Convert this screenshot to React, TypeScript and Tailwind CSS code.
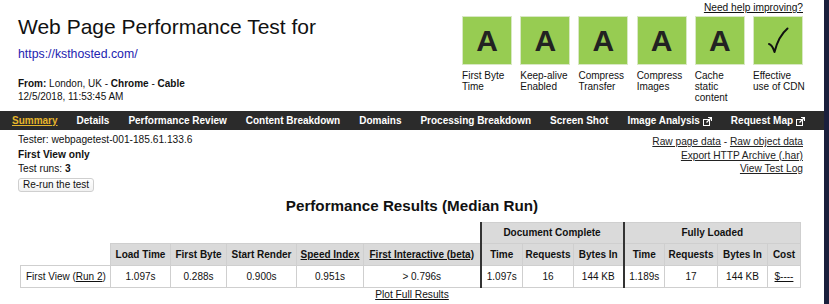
import React from "react";

// WebPageTest summary header + median run table
const grades = [
  { grade: "A", label: ["First Byte", "Time"] },
  { grade: "A", label: ["Keep-alive", "Enabled"] },
  { grade: "A", label: ["Compress", "Transfer"] },
  { grade: "A", label: ["Compress", "Images"] },
  { grade: "A", label: ["Cache", "static", "content"] },
  { grade: "check", label: ["Effective", "use of CDN"] },
];

const navItems = [
  { label: "Summary", active: true },
  { label: "Details" },
  { label: "Performance Review" },
  { label: "Content Breakdown" },
  { label: "Domains" },
  { label: "Processing Breakdown" },
  { label: "Screen Shot" },
  { label: "Image Analysis", external: true },
  { label: "Request Map", external: true },
];

function ExternalIcon() {
  return (
    <svg width="9" height="9" viewBox="0 0 9 9" className="ml-[3px] inline-block" aria-hidden>
      <rect x="0.5" y="2.5" width="6" height="6" fill="none" stroke="white" strokeWidth="1" />
      <path d="M3.5 5.5 L8.5 0.5" stroke="white" strokeWidth="1.2" />
      <path d="M5 0.5 H8.5 V4" fill="none" stroke="white" strokeWidth="1.2" />
    </svg>
  );
}

function Check() {
  return (
    <svg width="22" height="28" viewBox="0 0 22 28" aria-hidden>
      <path
        d="M2 17 C4 17.5 6 20 7.5 25 C10 15 14 7 20.5 1.5"
        fill="none"
        stroke="#111"
        strokeWidth="2"
        strokeLinecap="round"
        strokeLinejoin="round"
      />
    </svg>
  );
}

const th = "border border-[#cfcfcf] bg-[#dadada] font-bold text-center px-0";
const td = "border border-[#cfcfcf] bg-white text-center px-0";
const thick = "border-l-2 border-l-[#333]";

export default function App() {
  return (
    <div className="flex h-[304px] w-[829px] overflow-hidden bg-[#1a1f3c] font-['Liberation_Sans',Arial,sans-serif] text-[#111]">
      <div className="w-[824px] shrink-0 bg-white">
        {/* header */}
        <div className="flex h-[111px] justify-between">
          <div className="pl-[18px] pt-[15px]">
            <h1 className="text-[21px] leading-[24px] font-normal text-[#111]">
              Web Page Performance Test for
            </h1>
            <a className="mt-[7px] block text-[12.3px] leading-[16px] text-[#2323b0]">https://ksthosted.com/</a>
            <div className="mt-[15px] text-[10px] leading-[13px]">
              <div>
                <b>From:</b> London, UK - <b>Chrome</b> - <b>Cable</b>
              </div>
              <div>12/5/2018, 11:53:45 AM</div>
            </div>
          </div>
          <div className="flex flex-col items-end pr-[21px] pt-[1px]">
            <a className="text-[10.2px] leading-[13px] underline">Need help improving?</a>
            <div className="mt-[2px] flex gap-[8.2px]">
              {grades.map((g, i) => (
                <div key={i} className="w-[50px]">
                  <div className="flex h-[49px] w-[50px] items-center justify-center border border-[#d8e8c4] bg-[#97cc52]">
                    {g.grade === "check" ? (
                      <Check />
                    ) : (
                      <span className="text-[30px] leading-none font-bold text-[#222]">{g.grade}</span>
                    )}
                  </div>
                  <div className="mt-[5px] whitespace-nowrap text-[10px] leading-[11px]">
                    {g.label.map((l) => (
                      <div key={l}>{l}</div>
                    ))}
                  </div>
                </div>
              ))}
            </div>
          </div>
        </div>

        {/* nav */}
        <div className="flex h-[19px] items-center gap-[19px] bg-[#2b2b2b] pl-[12px] text-[10px] font-bold text-white">
          {navItems.map((n) => (
            <span key={n.label} className={n.active ? "text-[#e6b52c] underline" : ""}>
              {n.label}
              {n.external ? <ExternalIcon /> : null}
            </span>
          ))}
        </div>

        {/* test info */}
        <div className="flex justify-between">
          <div className="pl-[18px] pt-[3px] text-[10.2px] leading-[14.5px]">
            <div>Tester: webpagetest-001-185.61.133.6</div>
            <div className="font-bold">First View only</div>
            <div>
              Test runs: <b>3</b>
            </div>
            <button className="mt-[1px] h-[14px] rounded-[3px] border border-[#cfcfcf] bg-gradient-to-b from-white to-[#f1f1f1] px-[4px] text-[10px] leading-[12px]">
              Re-run the test
            </button>
          </div>
          <div className="pr-[21px] pt-[5px] text-right text-[10.2px] leading-[13.5px] text-[#222]">
            <div>
              <a className="underline">Raw page data</a> - <a className="underline">Raw object data</a>
            </div>
            <div>
              <a className="underline">Export HTTP Archive (.har)</a>
            </div>
            <div>
              <a className="underline">View Test Log</a>
            </div>
          </div>
        </div>

        {/* results */}
        <h2 className="mt-[5px] text-center text-[15.2px] leading-[18px] font-bold">
          Performance Results (Median Run)
        </h2>
        <table className="mt-[7px] ml-[20px] table-fixed border-collapse text-[10px] leading-[12px]">
          <colgroup>
            <col className="w-[90px]" />
            <col className="w-[60px]" />
            <col className="w-[56px]" />
            <col className="w-[70px]" />
            <col className="w-[67px]" />
            <col className="w-[117px]" />
            <col className="w-[42px]" />
            <col className="w-[51px]" />
            <col className="w-[50px]" />
            <col className="w-[41px]" />
            <col className="w-[53px]" />
            <col className="w-[50px]" />
            <col className="w-[33px]" />
          </colgroup>
          <tbody>
            <tr className="h-[21px]">
              <td colSpan={6} className="border-0 p-0"></td>
              <th colSpan={3} className={`${th} ${thick}`}>
                Document Complete
              </th>
              <th colSpan={4} className={`${th} ${thick}`}>
                Fully Loaded
              </th>
            </tr>
            <tr className="h-[22px]">
              <td className="border-0 p-0"></td>
              <th className={th}>Load Time</th>
              <th className={th}>First Byte</th>
              <th className={th}>Start Render</th>
              <th className={th}>
                <span className="underline">Speed Index</span>
              </th>
              <th className={th}>
                <span className="underline">First Interactive (beta)</span>
              </th>
              <th className={`${th} ${thick}`}>Time</th>
              <th className={th}>Requests</th>
              <th className={th}>Bytes In</th>
              <th className={`${th} ${thick}`}>Time</th>
              <th className={th}>Requests</th>
              <th className={th}>Bytes In</th>
              <th className={th}>Cost</th>
            </tr>
            <tr className="h-[22px]">
              <td className={`${td} !text-left pl-[5px]`}>
                First View (<span className="underline">Run 2</span>)
              </td>
              <td className={td}>1.097s</td>
              <td className={td}>0.288s</td>
              <td className={td}>0.900s</td>
              <td className={td}>0.951s</td>
              <td className={td}>&gt; 0.796s</td>
              <td className={`${td} ${thick}`}>1.097s</td>
              <td className={td}>16</td>
              <td className={td}>144 KB</td>
              <td className={`${td} ${thick}`}>1.189s</td>
              <td className={td}>17</td>
              <td className={td}>144 KB</td>
              <td className={td}>
                <span className="underline">$----</span>
              </td>
            </tr>
          </tbody>
        </table>
        <div className="text-center text-[10.2px] leading-[13px]">
          <a className="underline">Plot Full Results</a>
        </div>
      </div>
      <div className="flex-1" />
    </div>
  );
}
